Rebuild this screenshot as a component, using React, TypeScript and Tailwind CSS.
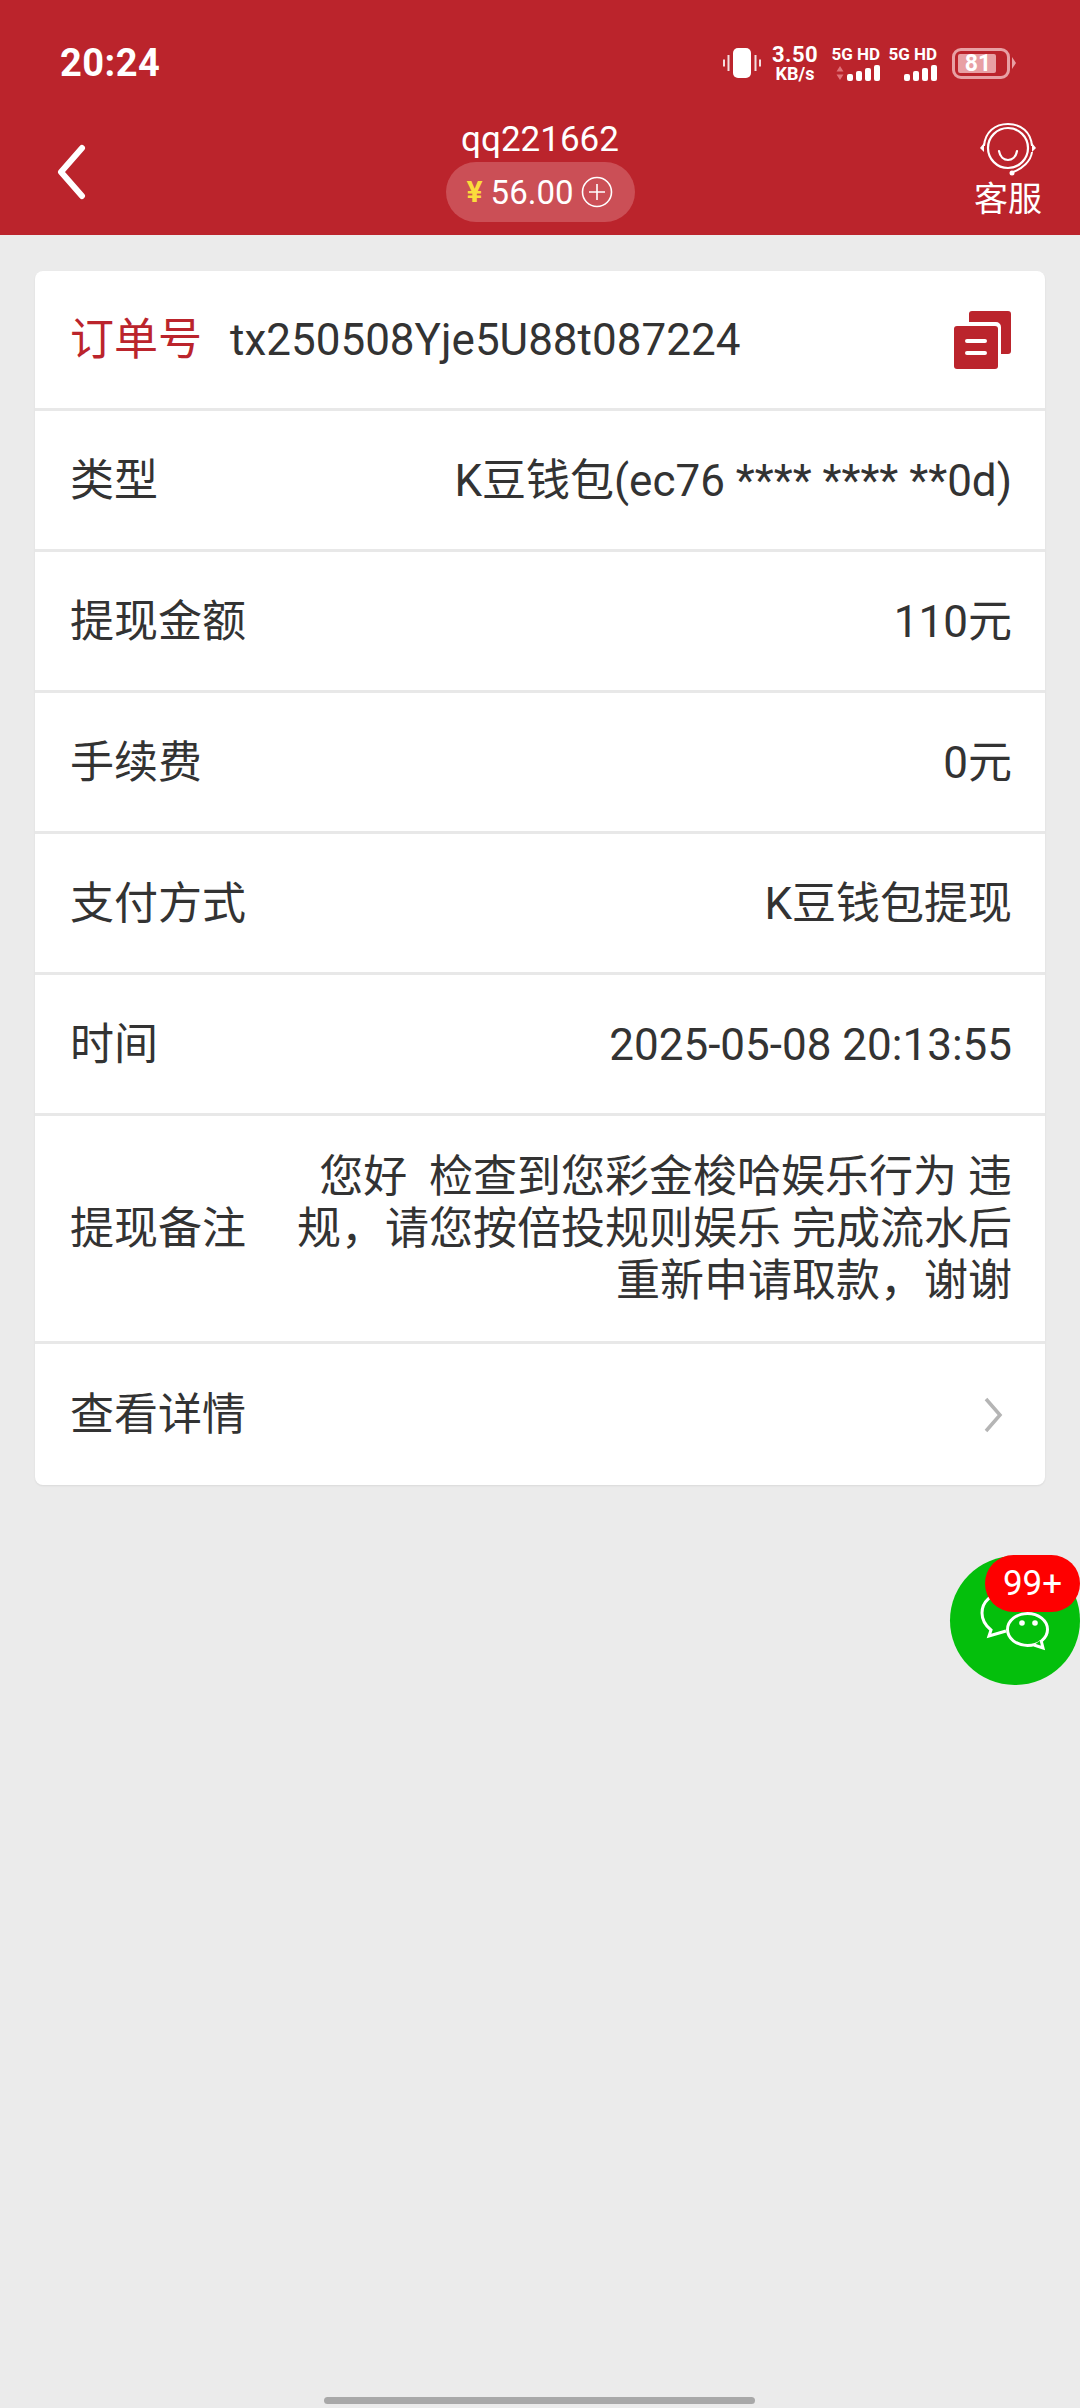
import React from "react";

const FONT = "font-['Roboto','Noto_Sans_CJK_SC',sans-serif]";

function Bars() {
  return (
    <div className="flex items-end gap-[3px]">
      <span className="w-[6px] h-[7px] bg-white rounded-[2px]" />
      <span className="w-[6px] h-[10px] bg-white rounded-[2px]" />
      <span className="w-[6px] h-[13px] bg-white rounded-[2px]" />
      <span className="w-[6px] h-[16px] bg-white rounded-[2px]" />
    </div>
  );
}

function StatusBar() {
  return (
    <div className="h-[110px] pt-[16px] pl-[60px] pr-[64px] flex items-center justify-between text-white">
      <span className="text-[38px] font-bold font-['Roboto',sans-serif] leading-none tracking-[0.5px]">20:24</span>
      <div className="flex items-center">
        <svg width="38" height="32" viewBox="0 0 38 32" className="mr-[10px]">
          <rect x="10" y="1" width="18" height="30" rx="5" fill="#fff" />
          <path d="M5.5 8v16M1 12.5v7M32.5 8v16M37 12.5v7" stroke="#fff" strokeWidth="2" opacity="0.85" />
        </svg>
        <div className="w-[48px] mr-[11px] flex flex-col items-center font-['Roboto',sans-serif] font-bold">
          <span className="text-[22px] h-[18px] tracking-[0.5px] leading-[18px] whitespace-nowrap">3.50</span>
          <span className="text-[18px] h-[15px] leading-[15px] mt-[2px] whitespace-nowrap">KB/s</span>
        </div>
        <div className="w-[50px] mr-[7px] flex flex-col items-end font-['Roboto',sans-serif] font-bold leading-none">
          <span className="text-[17px] h-[19px] whitespace-nowrap">5G HD</span>
          <div className="flex items-end gap-[3px]">
            <svg width="8" height="16" viewBox="0 0 8 16">
              <path d="M4 1l3.5 5.5h-7zM4 15l3.5-5.5h-7z" fill="#e0737a" />
            </svg>
            <Bars />
          </div>
        </div>
        <div className="w-[50px] mr-[15px] flex flex-col items-end font-['Roboto',sans-serif] font-bold leading-none">
          <span className="text-[17px] h-[19px] whitespace-nowrap">5G HD</span>
          <Bars />
        </div>
        <div className="relative w-[58px] h-[31px] rounded-[9px] border-[3px] border-[#e8a0a4] mr-[2px]">
          <div className="absolute left-[3px] top-[3px] bottom-[3px] w-[38px] rounded-[2px] bg-[#e8a0a4]" />
          <span className="absolute inset-0 flex items-center justify-center text-[23px] font-bold font-['Roboto',sans-serif] leading-none pr-[6px]">81</span>
        </div>
        <span className="w-0 h-0 border-y-[6px] border-y-transparent border-l-[4px] border-l-[#e8a0a4]" />
      </div>
    </div>
  );
}

function NavBar() {
  return (
    <div className="relative h-[125px] flex justify-center">
      <svg width="30" height="56" viewBox="0 0 30 56" className="absolute left-[57px] top-[34px]">
        <path d="M25 4L4 28l21 24" fill="none" stroke="#fff" strokeWidth="6" strokeLinecap="round" strokeLinejoin="round" />
      </svg>
      <div className="flex flex-col items-center">
        <span className="text-[35px] leading-[40px] mt-[10px] text-white font-['Roboto',sans-serif]">qq221662</span>
        <div className="mt-[2px] h-[60px] w-[189px] rounded-full bg-[#cb4f56] flex items-center justify-center text-white">
          <span className="text-[30px] text-[#fbdc3c] font-bold mr-[8px] leading-none">¥</span>
          <span className="text-[33px] leading-none font-['Roboto',sans-serif] mr-[8px]">56.00</span>
          <svg width="32" height="32" viewBox="0 0 32 32">
            <circle cx="16" cy="16" r="14.5" fill="none" stroke="#fff" strokeWidth="1.6" />
            <path d="M16 8v16M8 16h16" stroke="#fff" strokeWidth="1.6" />
          </svg>
        </div>
      </div>
      <div className="absolute right-[38px] top-[12px] flex flex-col items-center text-white">
        <svg width="60" height="54" viewBox="0 0 60 54">
          <path d="M6 24C7 10 17 2 30 2s23 8 24 22" fill="none" stroke="#fff" strokeWidth="2" />
          <circle cx="30" cy="26" r="20" fill="none" stroke="#fff" strokeWidth="2.2" />
          <path d="M21 29c1 6 5 9 9 9s8-3 9-9" fill="none" stroke="#fff" strokeWidth="2.2" strokeLinecap="round" />
          <path d="M6 21l-4 5 4 4zM54 21l4 5-4 4z" fill="#fff" />
          <path d="M54 30c-1 9-10 17-19 20" fill="none" stroke="#fff" strokeWidth="2" />
          <circle cx="34" cy="51" r="2.5" fill="#fff" />
        </svg>
        <span className={`text-[34px] leading-[40px] mt-[3px] ${FONT}`}>客服</span>
      </div>
    </div>
  );
}

function Row({ label, value }: { label: string; value: string }) {
  return (
    <div className="h-[141px] pl-[35px] pr-[33px] pt-[2px] flex items-center justify-between border-b-[3px] border-[#e8e8e8]">
      <span className="text-[44px] shrink-0 text-[#333]">{label}</span>
      <span className="text-[44px] text-[#333] text-right">{value}</span>
    </div>
  );
}

export default function App() {
  return (
    <div className={`relative w-[1080px] h-[2408px] bg-[#ebebeb] overflow-hidden ${FONT}`}>
      <div className="h-[235px] bg-[#bb242c]">
        <StatusBar />
        <NavBar />
      </div>

      <div className="mx-[35px] mt-[36px] bg-white rounded-[8px] shadow-[0_1px_2px_rgba(0,0,0,0.08)]">
        <div className="h-[140px] pl-[35px] pr-[34px] flex items-center justify-between border-b-[3px] border-[#e8e8e8]">
          <div className="flex items-center">
            <span className="text-[44px] text-[#bb242c]">订单号</span>
            <span className="text-[44px] text-[#333] ml-[28px]">tx250508Yje5U88t087224</span>
          </div>
          <svg width="57" height="58" viewBox="0 0 57 58">
            <path d="M15 3a3 3 0 0 1 3-3h36a3 3 0 0 1 3 3v37a3 3 0 0 1-3 3h-7V16a5 5 0 0 0-5-5H15z" fill="#bb242c" />
            <rect x="0" y="15" width="44" height="43" rx="3" fill="#bb242c" />
            <path d="M13 30h18M13 42h18" stroke="#fff" strokeWidth="4" strokeLinecap="round" />
          </svg>
        </div>
        <Row label="类型" value="K豆钱包(ec76 **** **** **0d)" />
        <Row label="提现金额" value="110元" />
        <Row label="手续费" value="0元" />
        <Row label="支付方式" value="K豆钱包提现" />
        <Row label="时间" value="2025-05-08 20:13:55" />
        <div className="h-[228px] pl-[35px] pr-[33px] flex items-center justify-between border-b-[3px] border-[#e8e8e8]">
          <span className="text-[44px] text-[#333] shrink-0">提现备注</span>
          <span className="w-[720px] text-[44px] leading-[52px] text-[#333] text-right whitespace-pre-wrap">
            您好&nbsp;&nbsp;检查到您彩金梭哈娱乐行为 违规，请您按倍投规则娱乐 完成流水后重新申请取款，谢谢
          </span>
        </div>
        <div className="h-[141px] pl-[35px] pr-[33px] flex items-center justify-between">
          <span className="text-[44px] text-[#333]">查看详情</span>
          <svg width="20" height="36" viewBox="0 0 20 36" className="mr-[9px]">
            <path d="M3 2l14 16L3 34" fill="none" stroke="#b5b5b5" strokeWidth="3.5" />
          </svg>
        </div>
      </div>

      {/* floating wechat button */}
      <div className="absolute left-[950px] top-[1556px] w-[130px] h-[129px] rounded-full bg-[#04bf0c] flex items-center justify-center">
        <svg width="72" height="60" viewBox="0 0 72 60">
          <path d="M26 2C12 2 3 11 3 22c0 8 4 13 9 17l-2 6 17-5" fill="none" stroke="#fff" strokeWidth="3" />
          <ellipse cx="48.5" cy="38.5" rx="20" ry="16" fill="#04bf0c" stroke="#fff" strokeWidth="3" />
          <path d="M55 54l9 3-2-8" fill="#04bf0c" stroke="#fff" strokeWidth="3" />
          <circle cx="43" cy="32" r="2.8" fill="#fff" />
          <circle cx="56" cy="32" r="2.8" fill="#fff" />
        </svg>
      </div>
      <div className="absolute left-[985px] top-[1555px] w-[95px] h-[57px] rounded-full bg-[#fe0000] flex items-center justify-center text-white text-[35px] leading-none font-['Roboto',sans-serif]">
        99+
      </div>

      <div className="absolute left-[324px] top-[2397px] w-[431px] h-[7px] rounded-full bg-[#a8a8a8]" />
    </div>
  );
}
